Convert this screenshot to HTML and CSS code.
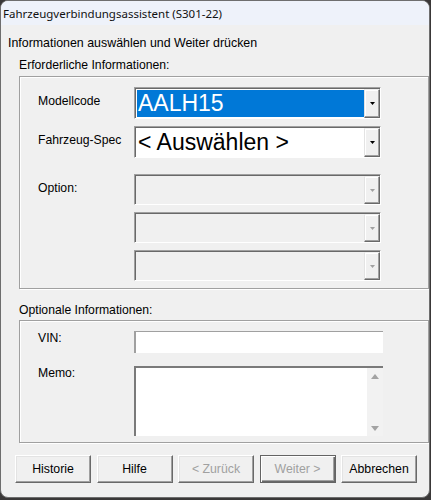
FILE: index.html
```html
<!DOCTYPE html>
<html lang="de">
<head>
<meta charset="utf-8">
<title>Fahrzeugverbindungsassistent</title>
<link rel="stylesheet" href="styles.css">
</head>
<body>
<div class="window">
  <div class="titlebar">Fahrzeugverbindungsassistent (S301-22)</div>
  <div class="client">
    <p class="intro">Informationen auswählen und Weiter drücken</p>

    <section class="group">
      <h2 class="group-title">Erforderliche Informationen:</h2>
      <div class="group-box required">
        <label class="field-label">Modellcode</label>
        <div class="combo">
          <div class="combo-value selected">AALH15</div>
          <div class="drop-btn"><svg width="5" height="3" viewBox="0 0 5 3"><polygon points="0,0 5,0 2.5,3" fill="#000"/></svg></div>
        </div>

        <label class="field-label">Fahrzeug-Spec</label>
        <div class="combo">
          <div class="combo-value">&lt; Auswählen &gt;</div>
          <div class="drop-btn"><svg width="5" height="3" viewBox="0 0 5 3"><polygon points="0,0 5,0 2.5,3" fill="#000"/></svg></div>
        </div>

        <label class="field-label option-label">Option:</label>
        <div class="combo disabled first-option">
          <div class="combo-value"></div>
          <div class="drop-btn"><svg width="5" height="3" viewBox="0 0 5 3"><polygon points="0,0 5,0 2.5,3" fill="#a0a0a0"/></svg></div>
        </div>

        <span></span>
        <div class="combo disabled">
          <div class="combo-value"></div>
          <div class="drop-btn"><svg width="5" height="3" viewBox="0 0 5 3"><polygon points="0,0 5,0 2.5,3" fill="#a0a0a0"/></svg></div>
        </div>

        <span></span>
        <div class="combo disabled">
          <div class="combo-value"></div>
          <div class="drop-btn"><svg width="5" height="3" viewBox="0 0 5 3"><polygon points="0,0 5,0 2.5,3" fill="#a0a0a0"/></svg></div>
        </div>
      </div>
    </section>

    <section class="group optional">
      <h2 class="group-title">Optionale Informationen:</h2>
      <div class="group-box optional-box">
        <label class="field-label flat">VIN:</label>
        <div class="textfield"></div>

        <label class="field-label flat">Memo:</label>
        <div class="memo">
          <div class="memo-text"></div>
          <div class="scrollbar">
            <svg width="8" height="5" viewBox="0 0 8 5"><polygon points="0,5 8,5 4,0" fill="#a3a3a3"/></svg>
            <svg width="8" height="5" viewBox="0 0 8 5"><polygon points="0,0 8,0 4,5" fill="#a3a3a3"/></svg>
          </div>
        </div>
      </div>
    </section>

    <div class="buttons">
      <button class="btn">Historie</button>
      <button class="btn">Hilfe</button>
      <button class="btn" disabled>&lt; Zurück</button>
      <button class="btn default" disabled>Weiter &gt;</button>
      <button class="btn">Abbrechen</button>
    </div>
  </div>
</div>
</body>
</html>
```

FILE: styles.css
```css
html, body {
  margin: 0;
  padding: 0;
}

body {
  width: 431px;
  height: 500px;
  background: #3a3838;
  overflow: hidden;
}

.window {
  width: 428px;
  height: 496px;
  border: 1px solid #6e6e6e;
  border-radius: 8px;
  background: #f0f0f0;
  overflow: hidden;
  display: flex;
  flex-direction: column;
  font-family: "Liberation Sans", Arial, sans-serif;
  font-size: 12px;
  color: #000;
}

.titlebar {
  height: 24px;
  line-height: 25px;
  padding-left: 2px;
  background: #eef2fa;
  font-family: "Noto Sans", "Open Sans", sans-serif;
  font-size: 11.5px;
  color: #111;
  white-space: nowrap;
}

.client {
  padding: 11px 0 0 7px;
  display: flex;
  flex-direction: column;
}

.intro {
  margin: 0;
  line-height: 14px;
  font-size: 12.4px;
}

.group {
  margin-left: 11px;
  margin-top: 8px;
}

.group.optional {
  margin-top: 14px;
}

.group-title {
  margin: 0 0 4px 0;
  font-size: 12.2px;
  font-weight: normal;
  line-height: 14px;
}

.optional .group-title {
  margin-bottom: 3px;
}

.group-box {
  width: 390px;
  border: 1px solid #a0a0a0;
  box-shadow: inset 1px 1px 0 #fff, 1px 1px 0 #fff;
  display: grid;
  grid-template-columns: 96px 247px;
  padding: 10px 0 7px 18px;
  row-gap: 7px;
}

.optional-box {
  grid-template-columns: 96px 249px;
  padding-bottom: 6px;
  row-gap: 13px;
}

.field-label {
  line-height: 14px;
  padding-top: 7px;
  font-size: 12.2px;
}

.field-label.flat {
  padding-top: 0;
}

.option-label,
.first-option {
  margin-top: 9px;
}

/* sunken combo box with a raised drop button */
.combo {
  height: 32px;
  box-sizing: border-box;
  border-top: 1px solid #a0a0a0;
  border-left: 1px solid #a0a0a0;
  border-right: 1px solid #fff;
  border-bottom: 1px solid #fff;
  background: #fff;
  display: flex;
  padding: 1px 0 0 1px;
  box-shadow: inset 1px 1px 0 #696969;
}

.combo.disabled {
  height: 31px;
  background: #f0f0f0;
}

.combo-value {
  flex: 1;
  margin: 1px 0 1px 1px;
  font-size: 23px;
  line-height: 27px;
  padding-left: 1px;
  white-space: nowrap;
  overflow: hidden;
}

.combo-value.selected {
  background: #0078d7;
  color: #fff;
}

.drop-btn {
  width: 14px;
  background: #f0f0f0;
  border-top: 1px solid #f0f0f0;
  border-left: 1px solid #e3e3e3;
  border-right: 1px solid #696969;
  border-bottom: 1px solid #696969;
  box-shadow: inset -1px -1px 0 #a0a0a0, inset 1px 1px 0 #fff;
  display: flex;
  align-items: center;
  justify-content: center;
}

.drop-btn svg {
  display: block;
}

.textfield {
  height: 22px;
  box-sizing: border-box;
  background: #fff;
  border-top: 1px solid #a0a0a0;
  border-left: 2px solid #a0a0a0;
}

.memo {
  height: 70px;
  box-sizing: border-box;
  background: #fff;
  border-top: 2px solid #7a7a7a;
  border-left: 2px solid #7a7a7a;
  display: flex;
}

.memo-text {
  flex: 1;
}

.scrollbar {
  width: 16px;
  background: #f2f2f2;
  display: flex;
  flex-direction: column;
  align-items: center;
  justify-content: space-between;
  padding: 6px 0 5px;
}

.scrollbar svg {
  display: block;
}

.buttons {
  margin: 12px 0 0 7px;
  display: flex;
  gap: 5.5px;
}

.btn {
  width: 76px;
  height: 28px;
  margin: 0;
  padding: 0;
  box-sizing: border-box;
  background: #f0f0f0;
  font-family: "Liberation Sans", Arial, sans-serif;
  font-size: 12.3px;
  color: #000;
  border-top: 1px solid #fff;
  border-left: 1px solid #fff;
  border-right: 1px solid #696969;
  border-bottom: 1px solid #696969;
  box-shadow: inset -1px -1px 0 #a0a0a0, inset 1px 1px 0 #e3e3e3;
  border-radius: 0;
}

.btn:disabled {
  color: #a0a0a0;
}

.btn.default {
  border: 1px solid #646464;
  box-shadow: inset 1px 1px 0 #fff, inset -1px -1px 0 #696969, inset -2px -2px 0 #a0a0a0;
}
```
